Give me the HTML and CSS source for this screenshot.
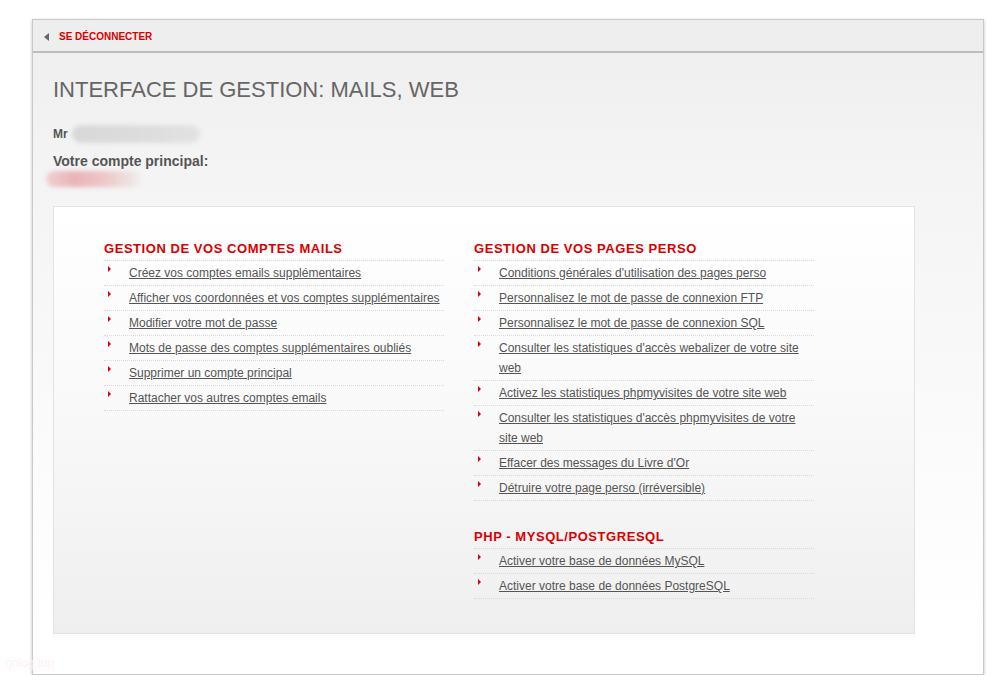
FILE: index.html
```
<!DOCTYPE html>
<html lang="fr">
  <head>
    <meta charset="UTF-8" />
    <title>Interface de gestion</title>
    <link rel="stylesheet" href="styles.css">
  </head>
  <body>
    <div class="account-box">
      <div class="topbar">
        <a class="logout" href="#"><span class="arrow-left"></span>SE DÉCONNECTER</a>
      </div>
      <div class="content">
        <h1>INTERFACE DE GESTION: MAILS, WEB</h1>
        <p class="civility">Mr <span class="blur blur-name"></span></p>
        <p class="account-label">Votre compte principal:</p>
        <span class="blur blur-account"></span>

        <div class="panel">
          <div class="column">
            <h2>GESTION DE VOS COMPTES MAILS</h2>
            <ul class="links">
              <li><a href="#">Créez vos comptes emails supplémentaires</a></li>
              <li><a href="#">Afficher vos coordonnées et vos comptes supplémentaires</a></li>
              <li><a href="#">Modifier votre mot de passe</a></li>
              <li><a href="#">Mots de passe des comptes supplémentaires oubliés</a></li>
              <li><a href="#">Supprimer un compte principal</a></li>
              <li><a href="#">Rattacher vos autres comptes emails</a></li>
            </ul>
          </div>
          <div class="column">
            <h2>GESTION DE VOS PAGES PERSO</h2>
            <ul class="links">
              <li><a href="#">Conditions générales d'utilisation des pages perso</a></li>
              <li><a href="#">Personnalisez le mot de passe de connexion FTP</a></li>
              <li><a href="#">Personnalisez le mot de passe de connexion SQL</a></li>
              <li><a href="#">Consulter les statistiques d'accès webalizer de votre site web</a></li>
              <li><a href="#">Activez les statistiques phpmyvisites de votre site web</a></li>
              <li><a href="#">Consulter les statistiques d'accès phpmyvisites de votre site web</a></li>
              <li><a href="#">Effacer des messages du Livre d'Or</a></li>
              <li><a href="#">Détruire votre page perso (irréversible)</a></li>
            </ul>
            <h2 class="spaced">PHP - MYSQL/POSTGRESQL</h2>
            <ul class="links">
              <li><a href="#">Activer votre base de données MySQL</a></li>
              <li><a href="#">Activer votre base de données PostgreSQL</a></li>
            </ul>
          </div>
        </div>
      </div>
    </div>
    <div class="watermark">qnlog.top</div>
  </body>
</html>
```
FILE: styles.css
```
body {
  margin: 0;
  padding: 19px 0 0 32px;
  background: #fff;
  font-family: 'Liberation Sans', Arial, sans-serif;
  color: #555;
}

.account-box {
  width: 950px;
  height: 654px;
  border: 1px solid #c9c9c9;
  box-shadow: 0 1px 3px rgba(0, 0, 0, 0.25);
  background: linear-gradient(to bottom, #eeeeee 0, #f4f4f4 150px, #ffffff 600px);
  box-sizing: content-box;
}

.topbar {
  height: 31px;
  background: #eeeeee;
  border-bottom: 2px solid #bdbdbd;
  display: flex;
  align-items: center;
  padding-left: 11px;
}

.logout {
  color: #d90000;
  font-size: 10px;
  font-weight: bold;
  text-decoration: none;
  display: flex;
  align-items: center;
  padding-top: 2px;
}

.arrow-left {
  width: 0;
  height: 0;
  border-top: 4px solid transparent;
  border-bottom: 4px solid transparent;
  border-right: 5px solid #666;
  margin-right: 10px;
}

.content {
  padding: 23px 20px 0 20px;
}

h1 {
  margin: 0;
  font-size: 22px;
  font-weight: normal;
  color: #666;
  line-height: 28px;
}

.civility {
  margin: 20px 0 0 0;
  font-size: 12px;
  font-weight: bold;
  display: flex;
  align-items: center;
  height: 20px;
}

.account-label {
  margin: 7px 0 0 0;
  font-size: 14px;
  font-weight: bold;
  line-height: 20px;
}

.blur {
  display: inline-block;
  border-radius: 10px;
  filter: blur(2px);
}

.blur-name {
  width: 128px;
  height: 18px;
  margin-left: 4px;
  background: linear-gradient(to right, #d8d8d8, #dcdcdc 50%, #e2e2e2);
}

.blur-account {
  display: block;
  width: 95px;
  height: 16px;
  margin-left: -7px;
  background: linear-gradient(to right, #f1d0d0, #e9b3b7 30%, #edc6c6 60%, #eee 100%);
}

.panel {
  margin-top: 19px;
  width: 862px;
  height: 428px;
  border: 1px solid #e2e2e2;
  background: linear-gradient(to bottom, #ffffff 0, #f9f9f9 200px, #efefef 100%);
  box-sizing: border-box;
  padding: 33px 50px 0 50px;
  display: flex;
  gap: 30px;
}

.column {
  width: 340px;
}

h2 {
  margin: 0;
  font-size: 13px;
  font-weight: bold;
  letter-spacing: 0.55px;
  color: #d90000;
  line-height: 18px;
  padding-bottom: 2px;
  border-bottom: 1px dotted #d8d8d8;
}

h2.spaced {
  margin-top: 27px;
}

.links {
  list-style: none;
  margin: 0;
  padding: 0;
}

.links li {
  position: relative;
  padding: 2px 0 2px 25px;
  border-bottom: 1px dotted #d8d8d8;
  font-size: 12px;
  line-height: 20px;
}

.links li::before {
  content: "";
  position: absolute;
  left: 4px;
  top: 5px;
  border-top: 3px solid transparent;
  border-bottom: 3px solid transparent;
  border-left: 3px solid #d90000;
}

.links a {
  color: #555;
}

.watermark {
  position: absolute;
  left: 5px;
  top: 656px;
  font-size: 12px;
  color: #fdf2f3;
}
```
